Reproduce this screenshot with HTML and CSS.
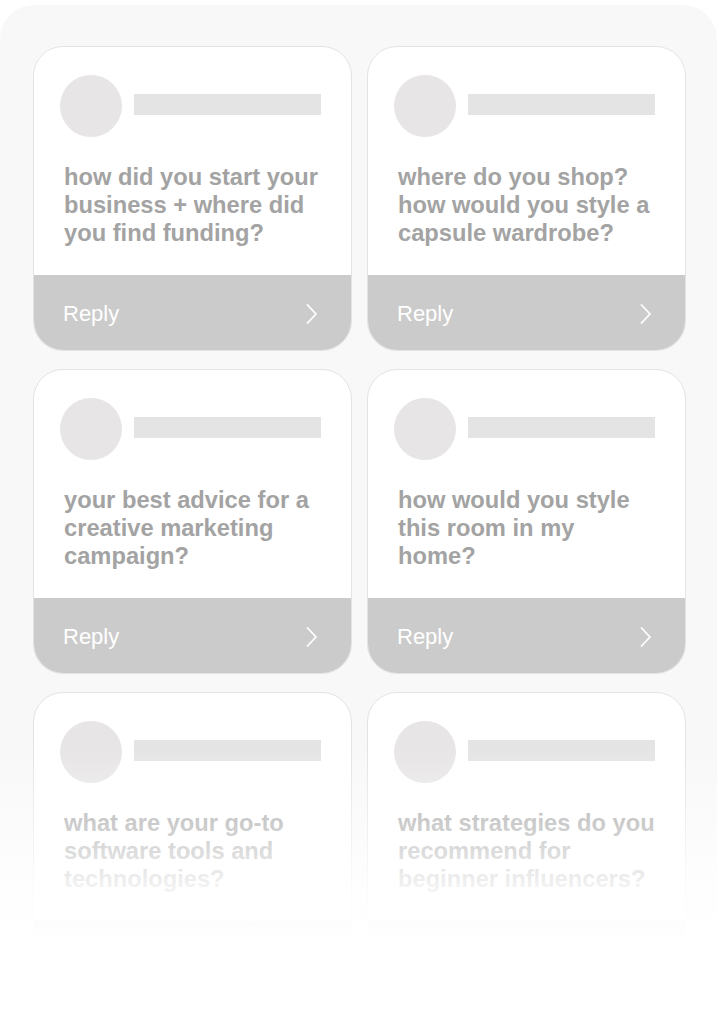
FILE: index.html
```html
<!DOCTYPE html>
<html>
<head>
<meta charset="utf-8">
<link rel="stylesheet" href="styles.css">
</head>
<body>
<div class="panel">
  <div class="grid">
    <div class="card">
      <div class="head"><div class="avatar"></div><div class="name"></div></div>
      <p class="q">how did you start your business + where did you find funding?</p>
      <div class="reply"><span>Reply</span><svg class="chev" width="12" height="20" viewBox="0 0 12 20"><polyline points="1.5,1 10,10 1.5,19" fill="none" stroke="#fff" stroke-width="1.8" stroke-linecap="round" stroke-linejoin="round"/></svg></div>
    </div>
    <div class="card">
      <div class="head"><div class="avatar"></div><div class="name"></div></div>
      <p class="q">where do you shop? how would you style a capsule wardrobe?</p>
      <div class="reply"><span>Reply</span><svg class="chev" width="12" height="20" viewBox="0 0 12 20"><polyline points="1.5,1 10,10 1.5,19" fill="none" stroke="#fff" stroke-width="1.8" stroke-linecap="round" stroke-linejoin="round"/></svg></div>
    </div>
    <div class="card">
      <div class="head"><div class="avatar"></div><div class="name"></div></div>
      <p class="q">your best advice for a creative marketing campaign?</p>
      <div class="reply"><span>Reply</span><svg class="chev" width="12" height="20" viewBox="0 0 12 20"><polyline points="1.5,1 10,10 1.5,19" fill="none" stroke="#fff" stroke-width="1.8" stroke-linecap="round" stroke-linejoin="round"/></svg></div>
    </div>
    <div class="card">
      <div class="head"><div class="avatar"></div><div class="name"></div></div>
      <p class="q">how would you style this room in my home?</p>
      <div class="reply"><span>Reply</span><svg class="chev" width="12" height="20" viewBox="0 0 12 20"><polyline points="1.5,1 10,10 1.5,19" fill="none" stroke="#fff" stroke-width="1.8" stroke-linecap="round" stroke-linejoin="round"/></svg></div>
    </div>
    <div class="card">
      <div class="head"><div class="avatar"></div><div class="name"></div></div>
      <p class="q">what are your go-to software tools and technologies?</p>
      <div class="reply"><span>Reply</span><svg class="chev" width="12" height="20" viewBox="0 0 12 20"><polyline points="1.5,1 10,10 1.5,19" fill="none" stroke="#fff" stroke-width="1.8" stroke-linecap="round" stroke-linejoin="round"/></svg></div>
    </div>
    <div class="card">
      <div class="head"><div class="avatar"></div><div class="name"></div></div>
      <p class="q">what strategies do you recommend for beginner influencers?</p>
      <div class="reply"><span>Reply</span><svg class="chev" width="12" height="20" viewBox="0 0 12 20"><polyline points="1.5,1 10,10 1.5,19" fill="none" stroke="#fff" stroke-width="1.8" stroke-linecap="round" stroke-linejoin="round"/></svg></div>
    </div>
  </div>
  <div class="fade"></div>
</div>
</body>
</html>
```

FILE: styles.css
```css
html, body {
  margin: 0;
  padding: 0;
  background: #ffffff;
  height: 1024px;
  overflow: hidden;
}

body {
  padding-top: 5px;
  box-sizing: border-box;
  font-family: "Liberation Sans", Arial, sans-serif;
}

.panel {
  position: relative;
  background: #f8f8f8;
  border-radius: 34px 34px 0 0;
  height: 1019px;
  padding: 41px 31px 0 33px;
  box-sizing: border-box;
  overflow: hidden;
}

.grid {
  display: grid;
  grid-template-columns: 319px 319px;
  column-gap: 15px;
  row-gap: 18px;
}

.card {
  background: #ffffff;
  border: 1px solid #e3e3e3;
  border-radius: 30px;
  overflow: hidden;
  height: 305px;
  box-sizing: border-box;
  display: flex;
  flex-direction: column;
}

.head {
  display: flex;
  align-items: center;
  padding: 28px 30px 0 26px;
}

.avatar {
  width: 62px;
  height: 62px;
  border-radius: 50%;
  background: #e7e5e5;
  flex: none;
}

.name {
  flex: 1;
  height: 21px;
  margin-left: 12px;
  margin-top: -3px;
  background: #e4e4e4;
}

.q {
  margin: 26px 29px 0 30px;
  font-size: 23.7px;
  line-height: 28px;
  font-weight: bold;
  color: #a3a3a3;
  height: 84px;
}

.reply {
  margin-top: auto;
  height: 75px;
  background: #cbcbcb;
  display: flex;
  align-items: center;
  justify-content: space-between;
  padding: 2px 33px 0 29px;
  box-sizing: border-box;
  color: #ffffff;
  font-size: 22px;
}

.chev {
  display: block;
}

.fade {
  position: absolute;
  left: 0;
  right: 0;
  top: 740px;
  bottom: 0;
  background: linear-gradient(to bottom, rgba(255,255,255,0) 0px, rgba(255,255,255,0.5) 90px, rgba(255,255,255,0.85) 140px, #ffffff 195px);
}
```
